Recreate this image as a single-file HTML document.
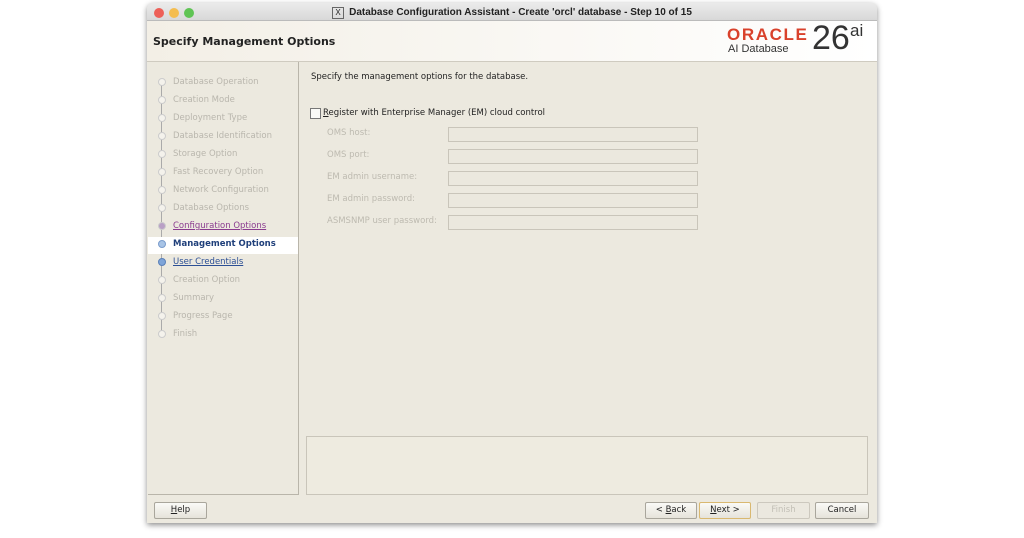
<!DOCTYPE html>
<html><head><style>
body{margin:0;width:1024px;height:538px;background:#fff;position:relative;overflow:hidden;font-family:"DejaVu Sans","Liberation Sans",sans-serif;}
.win{position:absolute;left:147px;top:3px;width:730px;height:520px;background:#ece9df;border-radius:6px 6px 0 0;box-shadow:0 2px 6px rgba(0,0,0,.45);overflow:hidden}
.tb{height:17px;background:linear-gradient(#ebebeb,#d8d8d8);border-bottom:1px solid #bbb;text-align:center;font:bold 10px "Liberation Sans",sans-serif;line-height:19px;color:#222}
.dot{position:absolute;top:5px;width:10px;height:10px;border-radius:50%}
.hdr{position:absolute;top:18px;left:0;width:730px;height:40px;background:linear-gradient(90deg,#f3efe6,#fff);border-bottom:1px solid #cfcbc0}
.hdr .t{position:absolute;left:6px;top:14px;font:bold 11px "DejaVu Sans",sans-serif;color:#222}
.left{position:absolute;left:1px;top:59px;width:150px;height:432px;border-right:1px solid #b9b5aa;border-bottom:1px solid #b9b5aa}
.step{position:absolute;left:25px;font-size:8.5px;color:#b9b6ad}
.line{position:absolute;left:13px;top:20px;width:1px;height:254px;background:#aaa}
.c{position:absolute;left:10px;width:6px;height:6px;border-radius:50%;border:1px solid #ccc;background:#f4f2ec}
.lbl{position:absolute;left:180px;font-size:8.5px;color:#bdbab0}
.fld{position:absolute;left:301px;width:248px;height:13px;border:1px solid #c9c5ba;background:#ebe8de}
.btn{position:absolute;top:499px;height:15px;border:1px solid #a9a69c;border-radius:2px;background:linear-gradient(#fafaf7,#e6e3da);font-size:8.5px;text-align:center;line-height:15px;color:#222}
</style></head><body>
<div class="win">
<div class="tb"><span style="display:inline-block;width:10px;height:10px;border:1px solid #666;font-size:8px;line-height:10px;margin-right:5px;font-weight:normal">X</span>Database Configuration Assistant - Create 'orcl' database - Step 10 of 15</div>
<div class="dot" style="left:7px;background:#ed5f57"></div>
<div class="dot" style="left:22px;background:#f4bd4f"></div>
<div class="dot" style="left:37px;background:#5fc454"></div>
<div class="hdr"><div class="t">Specify Management Options</div>
<div style="position:absolute;left:580px;top:4px;font:bold 17px 'Liberation Sans',sans-serif;color:#d9412b;letter-spacing:1.6px">ORACLE</div>
<div style="position:absolute;left:581px;top:22px;font:11px 'Liberation Sans',sans-serif;color:#333">AI Database</div>
<div style="position:absolute;left:665px;top:-2px;font:34px 'Liberation Sans',sans-serif;color:#333">26</div>
<div style="position:absolute;left:703px;top:0px;font:17px 'Liberation Sans',sans-serif;color:#333">ai</div>
</div>
<div class="left">
<div class="line"></div>
<div class="c" style="top:16px"></div><div class="step" style="top:15px">Database Operation</div>
<div class="c" style="top:34px"></div><div class="step" style="top:33px">Creation Mode</div>
<div class="c" style="top:52px"></div><div class="step" style="top:51px">Deployment Type</div>
<div class="c" style="top:70px"></div><div class="step" style="top:69px">Database Identification</div>
<div class="c" style="top:88px"></div><div class="step" style="top:87px">Storage Option</div>
<div class="c" style="top:106px"></div><div class="step" style="top:105px">Fast Recovery Option</div>
<div class="c" style="top:124px"></div><div class="step" style="top:123px">Network Configuration</div>
<div class="c" style="top:142px"></div><div class="step" style="top:141px">Database Options</div>
<div class="c" style="top:160px;background:#b9a0c6"></div><div class="step" style="top:159px;color:#8a3b8f;text-decoration:underline">Configuration Options</div>
<div style="position:absolute;left:0;top:175px;width:150px;height:17px;background:#fff"></div>
<div class="c" style="top:178px;background:#a8c4e6;border-color:#7a9ccc"></div><div class="step" style="top:177px;color:#1f3f7a;font-weight:bold">Management Options</div>
<div class="c" style="top:196px;background:#7ea4d8;border-color:#5a80b8"></div><div class="step" style="top:195px;color:#2c4f95;text-decoration:underline">User Credentials</div>
<div class="c" style="top:214px"></div><div class="step" style="top:213px">Creation Option</div>
<div class="c" style="top:232px"></div><div class="step" style="top:231px">Summary</div>
<div class="c" style="top:250px"></div><div class="step" style="top:249px">Progress Page</div>
<div class="c" style="top:268px"></div><div class="step" style="top:267px">Finish</div>
</div>
<div style="position:absolute;left:164px;top:69px;font-size:8.5px;color:#222">Specify the management options for the database.</div>
<div style="position:absolute;left:163px;top:105px;width:9px;height:9px;border:1px solid #777;background:#fafaf7"></div>
<div style="position:absolute;left:176px;top:105px;font-size:8.5px;color:#222"><u>R</u>egister with Enterprise Manager (EM) cloud control</div>
<div class="lbl" style="top:125px">OMS host:</div><div class="fld" style="top:124px"></div>
<div class="lbl" style="top:147px">OMS port:</div><div class="fld" style="top:146px"></div>
<div class="lbl" style="top:169px">EM admin username:</div><div class="fld" style="top:168px"></div>
<div class="lbl" style="top:191px">EM admin password:</div><div class="fld" style="top:190px"></div>
<div class="lbl" style="top:213px">ASMSNMP user password:</div><div class="fld" style="top:212px"></div>
<div style="position:absolute;left:159px;top:433px;width:560px;height:57px;border:1px solid #c9c5ba;background:#eeebe0"></div>
<div class="btn" style="left:7px;width:51px"><u>H</u>elp</div>
<div class="btn" style="left:498px;width:50px">&lt; <u>B</u>ack</div>
<div class="btn" style="left:552px;width:50px;border-color:#d9b870"><u>N</u>ext &gt;</div>
<div class="btn" style="left:610px;width:51px;color:#c2bfb6;background:#ebe8df;border-color:#ccc8be">Finish</div>
<div class="btn" style="left:668px;width:52px">Cancel</div>
</div>
</body></html>
